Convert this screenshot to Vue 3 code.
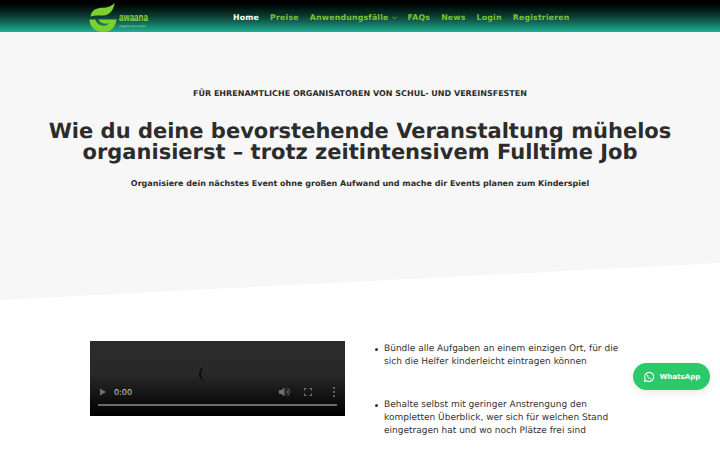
<script setup>
const navItems = [
  { label: "Home", active: true },
  { label: "Preise" },
  { label: "Anwendungsfälle", caret: true },
  { label: "FAQs" },
  { label: "News" },
  { label: "Login" },
  { label: "Registrieren" }
];
const bullets = [
  "Bündle alle Aufgaben an einem einzigen Ort, für die sich die Helfer kinderleicht eintragen können",
  "Behalte selbst mit geringer Anstrengung den kompletten Überblick, wer sich für welchen Stand eingetragen hat und wo noch Plätze frei sind"
];
</script>

<template>
  <div class="page">
    <header class="topbar">
      <div class="logo">
        <svg width="30" height="29" viewBox="0 0 30 30">
          <path d="M1 14C2 7 8 5 14 5C19 5 23 3 26 0C25 7 21 13 14 13C9 13 4 13 1 14Z" fill="#7ed02e" />
          <path d="M0 17C0 25 7 30 14 30C22 30 27 25 28 17L9 17C11 21 16 22 20 21C18 25 9 25 6 17Z" fill="#7ed02e" />
        </svg>
        <div class="logo-text">
          <span class="logo-name">awaana</span>
          <span class="logo-sub">organize your event</span>
        </div>
      </div>
      <nav class="nav">
        <a v-for="item in navItems" :key="item.label" class="nav-link" :class="{ active: item.active }">
          {{ item.label }}<svg v-if="item.caret" class="caret" width="5" height="4" viewBox="0 0 6 4"><path d="M0.5 0.5L3 3L5.5 0.5" fill="none" stroke="#7cc52f" stroke-width="1" /></svg>
        </a>
      </nav>
    </header>

    <section class="hero">
      <p class="eyebrow">Für ehrenamtliche Organisatoren von Schul- und Vereinsfesten</p>
      <h1 class="title">Wie du deine bevorstehende Veranstaltung mühelos organisierst – trotz zeitintensivem Fulltime Job</h1>
      <p class="subtitle">Organisiere dein nächstes Event ohne großen Aufwand und mache dir Events planen zum Kinderspiel</p>
      <svg class="slant" viewBox="0 0 720 37" preserveAspectRatio="none"><polygon points="0,37 720,0 720,37" fill="#ffffff" /></svg>
    </section>

    <section class="content">
      <div class="video">
        <div class="spinner"></div>
        <div class="controls">
          <svg width="8" height="8" viewBox="0 0 8 8"><polygon points="1,0.5 7,4 1,7.5" fill="#6f6f6f" /></svg>
          <span class="time">0:00</span>
          <span class="spacer"></span>
          <svg width="11" height="10" viewBox="0 0 11 10"><path d="M0 3H2.5L5.5 0.5V9.5L2.5 7H0Z" fill="#6f6f6f" /><path d="M7 2.5C8.5 3.5 8.5 6.500 7 7.500M8.500 1C11 3 11 7 8.500 9" fill="none" stroke="#6f6f6f" /></svg>
          <svg class="full" width="8" height="8" viewBox="0 0 8 8"><path d="M0.500 2.500V0.500H2.500M5.500 0.500H7.500V2.500M7.500 5.500V7.500H5.500M2.500 7.500H0.500V5.500" fill="none" stroke="#7a7a7a" /></svg>
          <svg class="more" width="2" height="10" viewBox="0 0 2 10"><circle cx="1" cy="1" r="1" fill="#7a7a7a" /><circle cx="1" cy="5" r="1" fill="#7a7a7a" /><circle cx="1" cy="9" r="1" fill="#7a7a7a" /></svg>
        </div>
        <div class="track"></div>
      </div>
      <ul class="points">
        <li v-for="b in bullets" :key="b">{{ b }}</li>
      </ul>
    </section>

    <a class="whatsapp">
      <svg width="12" height="12" viewBox="0 0 24 24">
        <path d="M3 21L4.400 15.900A9 9 0 1 1 8 19.600Z" fill="none" stroke="#fff" stroke-width="2.200" stroke-linejoin="round" />
        <path d="M9 7.500C8 8 7.800 9.500 8.500 11C9.500 13 11.500 15 13.500 15.800C15 16.300 16.300 15.800 16.800 14.600L14.700 13.400L13.600 14.300C12 13.600 10.800 12.400 10.100 10.800L11 9.800L9.900 7.500Z" fill="#fff" />
      </svg>
      <span>WhatsApp</span>
    </a>
  </div>
</template>

<style scoped>
.page {
  position: relative;
  width: 720px;
  height: 450px;
  overflow: hidden;
  background: #fff;
  font-family: "DejaVu Sans", sans-serif;
  color: #2c2c2c;
  text-rendering: geometricPrecision;
}
.topbar {
  height: 32px;
  display: flex;
  align-items: center;
  padding-left: 89px;
  background: linear-gradient(180deg, #000 0%, #000 12%, #0b3a30 50%, #1fae91 100%);
}
.logo {
  display: flex;
  align-items: flex-end;
  width: 144px;
  height: 32px;
}
.logo svg {
  display: block;
  flex: none;
}
.logo-text {
  display: flex;
  flex-direction: column;
  margin-bottom: 4px;
}
.logo-name {
  font-family: "Liberation Sans", sans-serif;
  font-size: 8px;
  font-weight: 700;
  line-height: 8px;
  color: #8fd04a;
  transform: scaleY(1.4);
  transform-origin: bottom;
}
.logo-sub {
  font-family: "Liberation Sans", sans-serif;
  font-size: 3px;
  line-height: 4px;
  color: #b9e0b0;
}
.nav {
  display: flex;
  align-items: center;
  gap: 11px;
  padding-top: 2px;
}
.nav-link {
  font-size: 7.800px;
  font-weight: 700;
  letter-spacing: 0.2px;
  color: #7cc52f;
  white-space: nowrap;
}
.nav-link.active {
  color: #fff;
}
.caret {
  margin-left: 3px;
  vertical-align: 0;
}
.hero {
  position: relative;
  height: 268px;
  box-sizing: border-box;
  padding-top: 56px;
  background: #f7f7f7;
  text-align: center;
}
.eyebrow {
  margin: 0;
  font-size: 8px;
  font-weight: 700;
  line-height: 12px;
  text-transform: uppercase;
  color: #2c2c2c;
}
.title {
  margin: 21px auto 0;
  width: 640px;
  font-size: 21px;
  font-weight: 700;
  line-height: 21px;
  color: #2c2c2c;
}
.subtitle {
  margin: 15px 0 0;
  font-size: 8px;
  font-weight: 700;
  line-height: 12px;
  color: #2c2c2c;
}
.slant {
  position: absolute;
  left: 0;
  bottom: 0;
  width: 720px;
  height: 37px;
  display: block;
}
.content {
  display: flex;
  align-items: flex-start;
  padding: 41px 90px 0;
}
.video {
  position: relative;
  flex: none;
  width: 255px;
  height: 75px;
  background: linear-gradient(180deg, #2c2c2c 0%, #282828 45%, #0a0a0a 85%, #000 100%);
}
.spinner {
  position: absolute;
  left: 109px;
  top: 26px;
  width: 10px;
  height: 14px;
  border-left: 2px solid #0a0a0a;
  border-radius: 50%;
}
.controls {
  position: absolute;
  left: 9px;
  right: 10px;
  top: 46px;
  display: flex;
  align-items: center;
  height: 10px;
}
.time {
  margin-left: 7px;
  font-size: 8px;
  color: #d4d4d4;
}
.spacer {
  flex: 1;
}
.full {
  margin-left: 14px;
}
.more {
  margin-left: 21px;
}
.track {
  position: absolute;
  left: 8px;
  right: 8px;
  top: 63px;
  height: 2px;
  background: #6a6a6a;
}
.points {
  margin: 0;
  padding: 2px 0 0 39px;
  width: 246px;
  list-style: none;
  font-size: 9px;
  line-height: 13px;
  color: #333;
}
.points li {
  position: relative;
  margin-bottom: 30px;
}
.points li::before {
  content: "";
  position: absolute;
  left: -9px;
  top: 5px;
  width: 3px;
  height: 3px;
  border-radius: 50%;
  background: #333;
}
.whatsapp {
  position: absolute;
  left: 633px;
  top: 363px;
  width: 77px;
  height: 27px;
  display: flex;
  align-items: center;
  justify-content: center;
  gap: 5px;
  border-radius: 14px;
  background: #2bc96a;
  box-shadow: 0 2px 8px rgba(0, 0, 0, 0.1);
  color: #fff;
  font-size: 7px;
  font-weight: 700;
}
</style>
